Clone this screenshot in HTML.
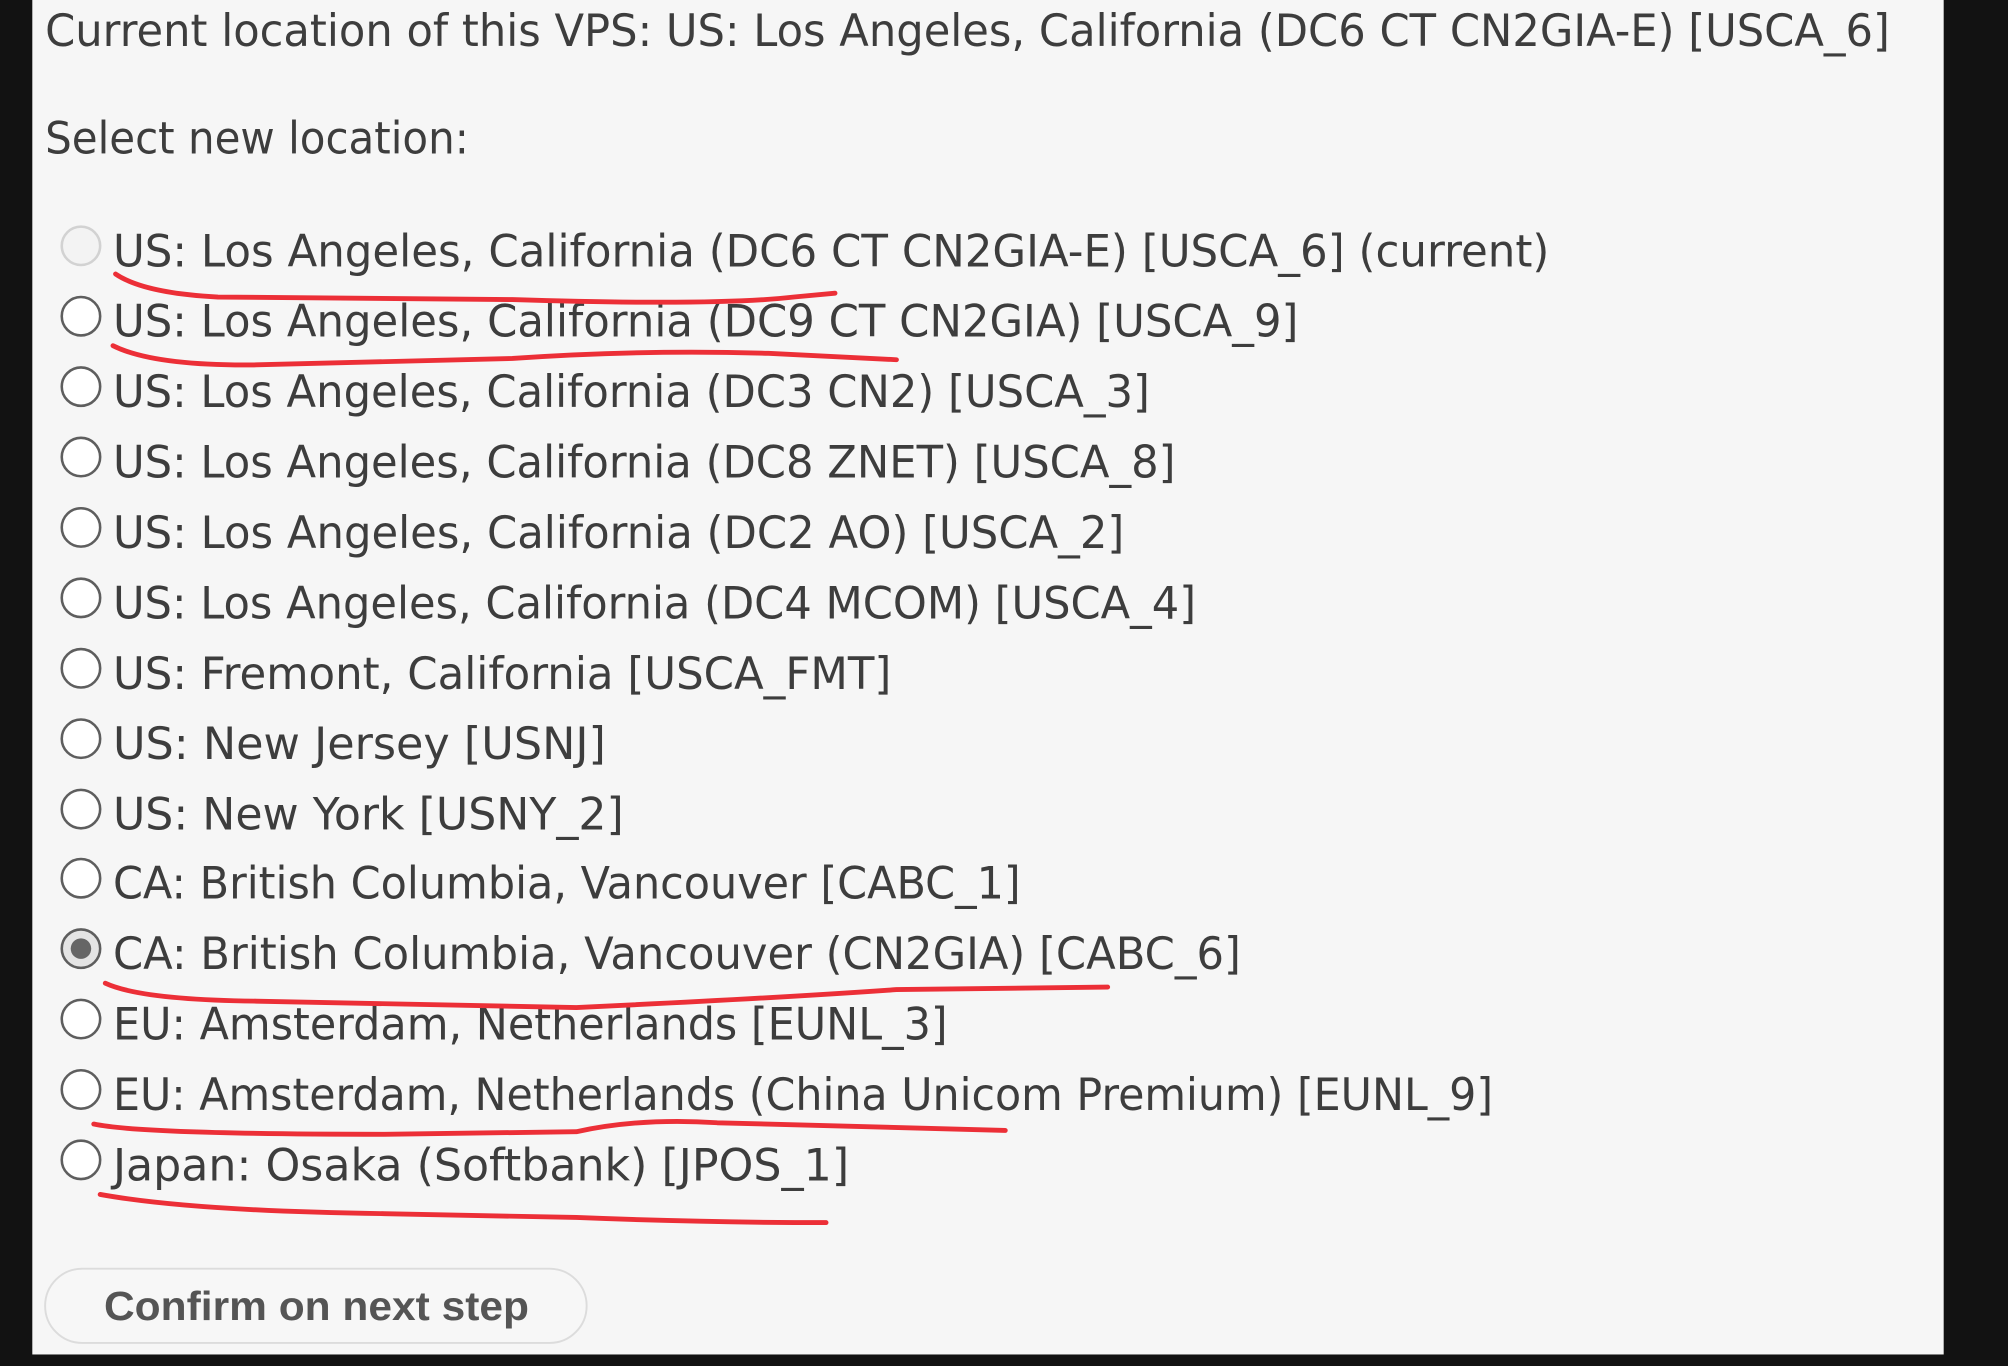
<!DOCTYPE html>
<html><head><meta charset="utf-8"><style>
html,body{margin:0;padding:0;background:#121212;}
svg{display:block}
</style></head><body>
<svg width="2008" height="1366" viewBox="0 0 1568 1067" xmlns="http://www.w3.org/2000/svg">
<rect x="0" y="0" width="1568" height="1067" fill="#121212"/>
<rect x="25" y="0" width="1493" height="1058" fill="#f6f6f6"/>
<g font-family="'DejaVu Sans', Verdana, sans-serif" font-size="35" fill="#3d3d3d">
<text x="35" y="36" textLength="1441" lengthAdjust="spacingAndGlyphs">Current location of this VPS: US: Los Angeles, California (DC6 CT CN2GIA-E) [USCA_6]</text>
<text x="35" y="120" textLength="331" lengthAdjust="spacingAndGlyphs">Select new location:</text>
<text x="88" y="208" textLength="1122" lengthAdjust="spacingAndGlyphs">US: Los Angeles, California (DC6 CT CN2GIA-E) [USCA_6] (current)</text>
<text x="88" y="263" textLength="926" lengthAdjust="spacingAndGlyphs">US: Los Angeles, California (DC9 CT CN2GIA) [USCA_9]</text>
<text x="88" y="318" textLength="810" lengthAdjust="spacingAndGlyphs">US: Los Angeles, California (DC3 CN2) [USCA_3]</text>
<text x="88" y="373" textLength="830" lengthAdjust="spacingAndGlyphs">US: Los Angeles, California (DC8 ZNET) [USCA_8]</text>
<text x="88" y="428" textLength="790" lengthAdjust="spacingAndGlyphs">US: Los Angeles, California (DC2 AO) [USCA_2]</text>
<text x="88" y="483" textLength="846" lengthAdjust="spacingAndGlyphs">US: Los Angeles, California (DC4 MCOM) [USCA_4]</text>
<text x="88" y="538" textLength="608" lengthAdjust="spacingAndGlyphs">US: Fremont, California [USCA_FMT]</text>
<text x="88" y="593" textLength="385" lengthAdjust="spacingAndGlyphs">US: New Jersey [USNJ]</text>
<text x="88" y="648" textLength="399" lengthAdjust="spacingAndGlyphs">US: New York [USNY_2]</text>
<text x="88" y="702" textLength="709" lengthAdjust="spacingAndGlyphs">CA: British Columbia, Vancouver [CABC_1]</text>
<text x="88" y="757" textLength="881" lengthAdjust="spacingAndGlyphs">CA: British Columbia, Vancouver (CN2GIA) [CABC_6]</text>
<text x="88" y="812" textLength="652" lengthAdjust="spacingAndGlyphs">EU: Amsterdam, Netherlands [EUNL_3]</text>
<text x="88" y="867" textLength="1078" lengthAdjust="spacingAndGlyphs">EU: Amsterdam, Netherlands (China Unicom Premium) [EUNL_9]</text>
<text x="88" y="922" textLength="575" lengthAdjust="spacingAndGlyphs">Japan: Osaka (Softbank) [JPOS_1]</text>
</g>
<g fill="#fff" stroke="#5e5e5e" stroke-width="2">
<circle cx="63" cy="192" r="15" fill="#f3f3f3" stroke="#d2d2d2"/>
<circle cx="63" cy="247" r="15"/>
<circle cx="63" cy="302" r="15"/>
<circle cx="63" cy="357" r="15"/>
<circle cx="63" cy="412" r="15"/>
<circle cx="63" cy="467" r="15"/>
<circle cx="63" cy="522" r="15"/>
<circle cx="63" cy="577" r="15"/>
<circle cx="63" cy="632" r="15"/>
<circle cx="63" cy="686" r="15"/>
<circle cx="63" cy="741" r="15" fill="#e4e4e4"/>
<circle cx="63" cy="796" r="15"/>
<circle cx="63" cy="851" r="15"/>
<circle cx="63" cy="906" r="15"/>
</g>
<circle cx="63" cy="741" r="8" fill="#666"/>
<g fill="none" stroke="#ec2f37" stroke-width="3.8" stroke-linecap="round" stroke-linejoin="round">
<path d="M90 214 Q112 229 170 232 L400 234 Q560 239 620 232 L652 229"/>
<path d="M88 270 Q120 286 200 285 L400 280 Q500 273 600 276 L700 281"/>
<path d="M82 768 Q110 781 200 782 L450 787 Q600 780 700 773 L865 771"/>
<path d="M73 878 Q110 886 300 886 L450 884 Q500 873 560 877 L785 883"/>
<path d="M78 933 Q150 946 300 948 L450 951 Q550 955 645 955"/>
</g>
<rect x="35" y="991" width="423" height="58" rx="29" fill="#f7f7f7" stroke="#dcdcdc" stroke-width="1.5"/>
<text x="81" y="1031" font-family="'Liberation Sans', Arial, sans-serif" font-weight="bold" font-size="32" fill="#555" textLength="332" lengthAdjust="spacingAndGlyphs">Confirm on next step</text>
</svg>
</body></html>
